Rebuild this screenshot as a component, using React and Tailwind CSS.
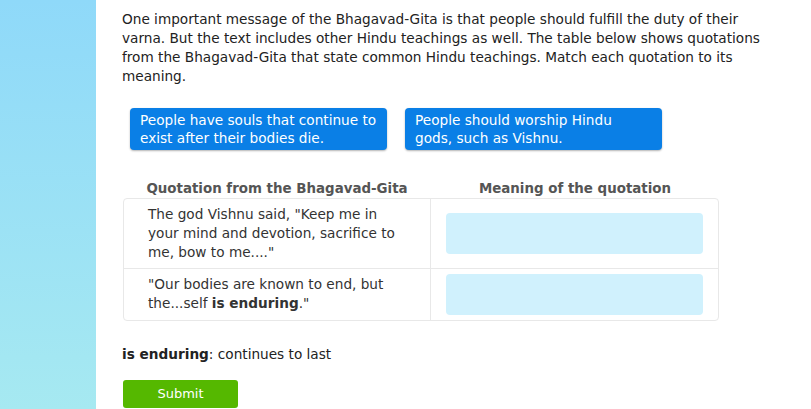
export default function App() {
  const rows = [
    {
      id: 1,
      quote: (
        <>
          The god Vishnu said, "Keep me in
          <br />
          your mind and devotion, sacrifice to
          <br />
          me, bow to me...."
        </>
      ),
    },
    {
      id: 2,
      quote: (
        <>
          "Our bodies are known to end, but
          <br />
          the...self <b>is enduring</b>."
        </>
      ),
    },
  ];

  return (
    <div
      className="flex h-[409px] w-[811px] overflow-hidden bg-white text-[13.65px] text-[#222]"
      style={{ fontFamily: "Verdana, 'DejaVu Sans', sans-serif" }}
    >
      <div className="w-[96px] shrink-0 bg-gradient-to-b from-[#8fd9f9] to-[#a6e9f1]" />

      <div className="flex-1 pl-[26px] pt-[10px]">
        <p className="w-[660px] leading-[19px]">
          One important message of the Bhagavad-Gita is that people should fulfill the duty of their
          <br />
          varna. But the text includes other Hindu teachings as well. The table below shows quotations
          <br />
          from the Bhagavad-Gita that state common Hindu teachings. Match each quotation to its
          <br />
          meaning.
        </p>

        <div className="mt-[22px] ml-[8px] flex gap-[18px]">
          <div className="h-[42px] w-[257px] whitespace-nowrap rounded-[4px] bg-[#0a7fe6] px-[10px] py-[3px] leading-[18px] text-white shadow-[0_1px_2px_rgba(0,0,0,0.3)]">
            People have souls that continue to
            <br />
            exist after their bodies die.
          </div>
          <div className="h-[42px] w-[257px] whitespace-nowrap rounded-[4px] bg-[#0a7fe6] px-[10px] py-[3px] leading-[18px] text-white shadow-[0_1px_2px_rgba(0,0,0,0.3)]">
            People should worship Hindu
            <br />
            gods, such as Vishnu.
          </div>
        </div>

        <div className="mt-[29px] ml-[1px] w-[596px]">
          <div className="flex text-[13.4px] font-bold leading-[19px] text-[#555]">
            <div className="w-[308px] text-center">Quotation from the Bhagavad-Gita</div>
            <div className="w-[288px] text-center">Meaning of the quotation</div>
          </div>
          <div className="rounded-[4px] border border-[#e8e8e8]">
            {rows.map((row, i) => (
              <div
                key={row.id}
                className={`flex ${i > 0 ? "border-t border-[#e8e8e8]" : ""}`}
              >
                <div className="w-[307px] border-r border-[#e8e8e8] py-[6px] pl-[24px] leading-[19px] text-[#333]">
                  {row.quote}
                </div>
                <div className="flex flex-1 items-center px-[15px] py-[5px]">
                  <div className="h-[41px] w-full rounded-[4px] bg-[#d0f1fd]" />
                </div>
              </div>
            ))}
          </div>
        </div>

        <p className="mt-[24px] leading-[19px]">
          <b>is enduring</b>: continues to last
        </p>

        <button className="mt-[16px] ml-[1px] h-[28px] w-[115px] rounded-[3px] bg-[#55b800] text-[13px] text-white">
          Submit
        </button>
      </div>
    </div>
  );
}
